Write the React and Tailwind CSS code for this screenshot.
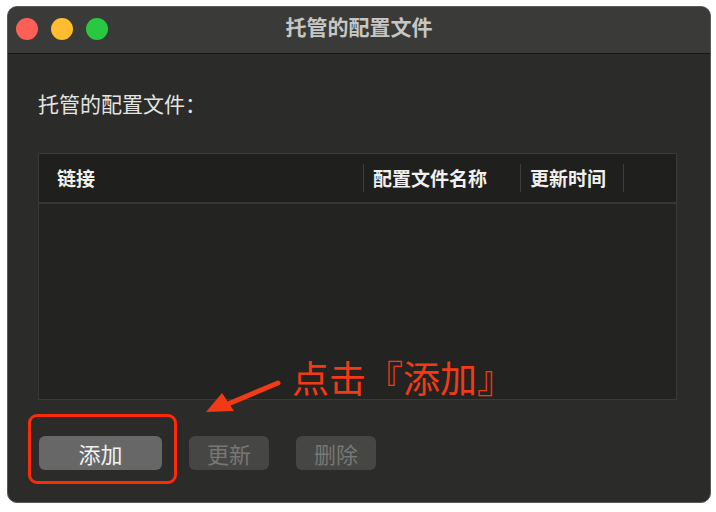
const cjk = { fontFamily: '"Noto Sans CJK SC", "Noto Sans", sans-serif' };

function TrafficLights() {
  return (
    <div className="absolute left-[8px] top-[11px] flex items-center gap-[13px]">
      <span className="h-[22px] w-[22px] rounded-full bg-[#fe5f57]" />
      <span className="h-[22px] w-[22px] rounded-full bg-[#febc2e]" />
      <span className="h-[22px] w-[22px] rounded-full bg-[#28c840]" />
    </div>
  );
}

function Button({ children, active }) {
  return (
    <div
      className={`flex h-[34px] items-center justify-center rounded-[6px] text-[22px] ${
        active ? 'w-[123px] bg-[#676767] text-[#f2f2f2]' : 'w-[80px] bg-[#464644] text-[#777775]'
      }`}
    >
      {children}
    </div>
  );
}

export default function App() {
  return (
    <div className="h-[512px] w-[716px] bg-white pl-[7px] pt-[6px]" style={cjk}>
      <div className="relative flex h-[497px] w-[704px] flex-col overflow-hidden rounded-[10px] border border-[#5a5a58] bg-[#2b2b29]">
        {/* title bar */}
        <div className="relative flex h-[47px] shrink-0 items-start justify-center border-b border-[#161616] bg-[#3a3a38] pt-[4px]">
          <TrafficLights />
          <span className="text-[21px] font-bold leading-[30px] text-[#c6c6c4]">托管的配置文件</span>
        </div>

        <div className="flex flex-1 flex-col px-[30px]">
          <div className="mt-[34px] text-[21px] leading-[30px] text-[#e4e4e2]">托管的配置文件：</div>

          {/* table */}
          <div className="mt-[35px] flex h-[247px] w-[639px] flex-col border border-[#3a3a38] bg-[#232321]">
            <div className="flex h-[50px] shrink-0 items-center border-b-2 border-[#363634] bg-[#1f1f1d] text-[19px] font-bold text-[#f0f0ee]">
              <div className="w-[324px] pl-[18px]">链接</div>
              <div className="h-[28px] w-px bg-[#3e3e3c]" />
              <div className="w-[156px] pl-[9px]">配置文件名称</div>
              <div className="h-[28px] w-px bg-[#3e3e3c]" />
              <div className="w-[102px] pl-[9px]">更新时间</div>
              <div className="h-[28px] w-px bg-[#3e3e3c]" />
            </div>
            <div className="flex-1" />
          </div>

          {/* buttons */}
          <div className="mt-[36px] flex items-center gap-[27px] pl-[1px]">
            <Button active>添加</Button>
            <Button>更新</Button>
            <Button>删除</Button>
          </div>
        </div>

        {/* annotation overlay */}
        <div className="absolute left-[20px] top-[407px] h-[70px] w-[149px] rounded-[9px] border-[3px] border-[#ff2a06]" />
        <div className="absolute left-[284px] top-[346px] text-[37px] leading-[48px] text-[#f23a16]">点击『添加』</div>
        <svg className="absolute left-[190px] top-[364px]" width="90" height="50" viewBox="0 0 90 50">
          <path d="M80 12 L30 33" stroke="#f23a16" strokeWidth="5" strokeLinecap="round" />
          <polygon points="8,41 24,22 36,40" fill="#f23a16" />
        </svg>
      </div>
    </div>
  );
}
